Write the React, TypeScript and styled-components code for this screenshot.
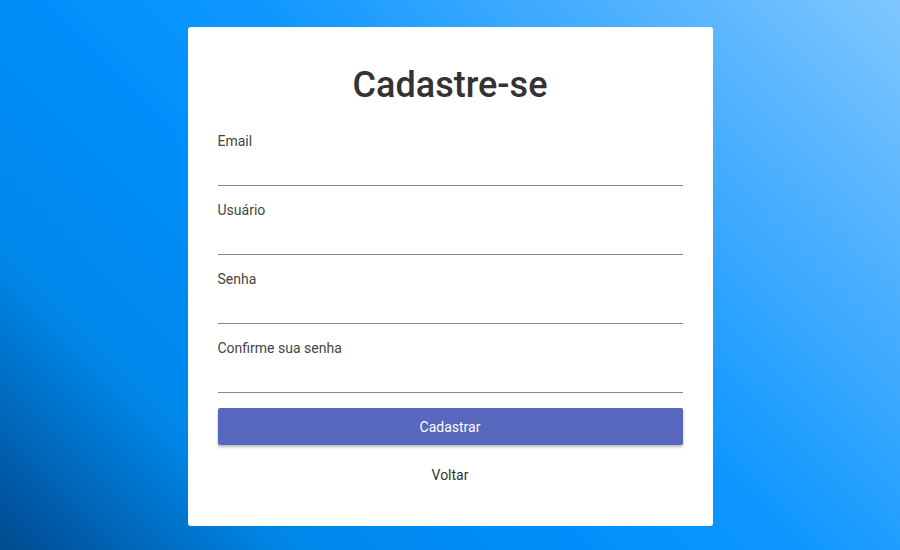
import React from "react";
import styled, { createGlobalStyle } from "styled-components";

type field_props = {
    label: string,
    type?: string,
}

const GlobalStyle = createGlobalStyle`
  html, body {
    margin: 0;
    padding: 0;
    height: 100%;
  }
  body {
    font-family: Roboto, "Liberation Sans", sans-serif;
    background: linear-gradient(
      45deg,
      #004a8e 0%,
      #0086e8 20%,
      #008ffa 40%,
      #0e96ff 55%,
      #80c6ff 100%
    );
  }
`;

const Page = styled.div`
  min-height: 100vh;
  display: flex;
  justify-content: center;
  align-items: flex-start;
  padding-top: 27px;
  box-sizing: border-box;
`;

const Card = styled.div`
  width: 525px;
  box-sizing: border-box;
  background: #fff;
  border-radius: 3px;
  padding: 30px 30px 33px;
  display: flex;
  flex-direction: column;
`;

const Title = styled.h1`
  margin: 7px 0 27px;
  font-size: 36px;
  line-height: 42px;
  font-weight: 500;
  color: #333;
  text-align: center;
`;

const Form = styled.form`
  display: flex;
  flex-direction: column;
  gap: 16px;
`;

const StyledField = styled.label`
  display: flex;
  flex-direction: column;
`;

const FieldLabel = styled.span`
  font-size: 14px;
  line-height: 17px;
  color: #444;
`;

const Input = styled.input`
  height: 36px;
  box-sizing: border-box;
  border: none;
  border-bottom: 1px solid #888;
  outline: none;
  background: transparent;
  font-family: inherit;
  font-size: 14px;
  color: #333;
  padding: 0;
`;

const SubmitButton = styled.button`
  height: 37px;
  margin-top: -1px;
  border: none;
  border-radius: 2px;
  background: #5767be;
  color: #fff;
  font-family: inherit;
  font-size: 14px;
  box-shadow: 0 2px 3px rgba(0, 0, 0, 0.28);
  cursor: pointer;
`;

const BackButton = styled.button`
  height: 36px;
  margin-top: 12px;
  border: none;
  background: transparent;
  color: #333;
  font-family: inherit;
  font-size: 14px;
  cursor: pointer;
`;

const Field = ({label, type = "text"}: field_props) => (
    <StyledField>
      <FieldLabel>{label}</FieldLabel>
      <Input type={type} />
    </StyledField>
);

export default function App() {
    return (
      <>
        <GlobalStyle />
        <Page>
          <Card>
            <Title>Cadastre-se</Title>
            <Form onSubmit={e => e.preventDefault()}>
              <Field label="Email" type="email" />
              <Field label="Usuário" />
              <Field label="Senha" type="password" />
              <Field label="Confirme sua senha" type="password" />
              <SubmitButton type="submit">Cadastrar</SubmitButton>
            </Form>
            <BackButton type="button">Voltar</BackButton>
          </Card>
        </Page>
      </>
    );
}
